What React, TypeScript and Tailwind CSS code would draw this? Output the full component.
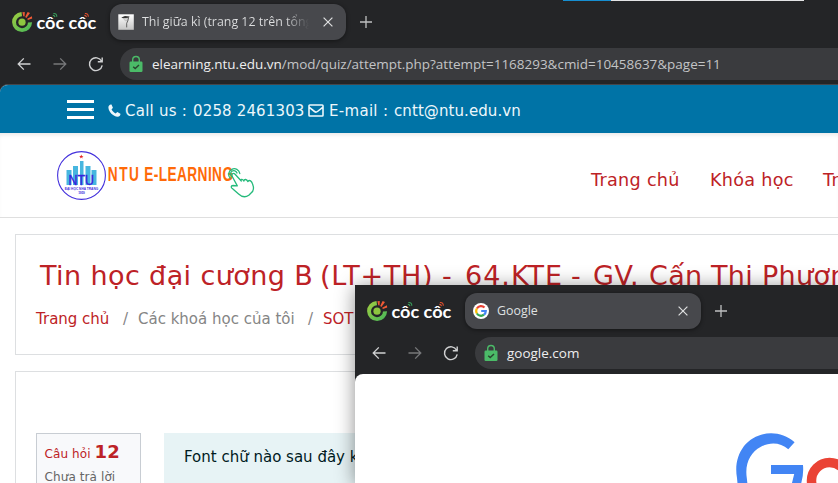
import React from "react";

const segoe = "font-['Open_Sans','Noto_Sans',sans-serif]";
const verdana = "font-['DejaVu_Sans',sans-serif]";

function CocCocLogo() {
  return (
    <svg width="88" height="28" viewBox="0 0 88 28" className="shrink-0">
      <defs>
        <linearGradient id="leaf" x1="0" y1="0" x2="1" y2="1">
          <stop offset="0" stopColor="#a4cf3f" />
          <stop offset="1" stopColor="#43b65a" />
        </linearGradient>
      </defs>
      <path d="M11.5 2A10 10 0 1 0 22.1 12.3L18 12.4A6 6 0 1 1 12 6.2Z" fill="url(#leaf)" />
      <circle cx="12" cy="12.2" r="3.6" fill="#8dc63f" />
      <path d="M12.4 2.2L14.8 2L14.5 6.6L13.3 6.2Z" fill="#f15a35" />
      <path d="M17.6 2L20 3.1L16.4 7.9L15.2 7.1Z" fill="#f15a35" />
      <path d="M21.9 6.3L22.2 8.6L17.9 9.9L17.2 8.8Z" fill="#f15a35" />
      <text x="26.5" y="19.2" textLength="59.8" lengthAdjust="spacingAndGlyphs" fill="#fff" fontSize="16.2" fontWeight="700" fontFamily="Lato, sans-serif">côc côc</text>
      <path d="M43.4 3.6q3.4-.4 3.4 3.2M42.8 5.2q1.8 0 2.2 2" stroke="#39a05c" strokeWidth="1.1" fill="none" />
      <path d="M74.9 3.6q3.4-.4 3.4 3.2M74.3 5.2q1.8 0 2.2 2" stroke="#e4512e" strokeWidth="1.1" fill="none" />
    </svg>
  );
}

function GoogleIcon() {
  return (
    <svg width="16" height="16" viewBox="0 0 16 16" className="shrink-0">
      <circle cx="8" cy="8" r="8" fill="#fff" />
      <g fill="none" strokeWidth="2.2">
        <path d="M3.9 5.5A4.8 4.8 0 0 1 11.5 4.6" stroke="#ea4335" />
        <path d="M3.9 5.5A4.8 4.8 0 0 0 3.9 10.5" stroke="#fbbc05" />
        <path d="M3.9 10.5A4.8 4.8 0 0 0 11 11.7" stroke="#34a853" />
        <path d="M11 11.7A4.8 4.8 0 0 0 12.8 8H8.2" stroke="#4285f4" />
      </g>
    </svg>
  );
}

function QuizIcon() {
  return (
    <svg width="16" height="16" viewBox="0 0 16 16" className="shrink-0">
      <defs>
        <linearGradient id="paper" x1="0" y1="0" x2="0" y2="1">
          <stop offset="0" stopColor="#fff" />
          <stop offset="1" stopColor="#c4c4c4" />
        </linearGradient>
      </defs>
      <rect width="15.5" height="15.5" x=".3" y=".3" fill="url(#paper)" />
      <path d="M3.3 3.4L7 2L11.6 2.6L10.8 3.7L5 4.2Z" fill="#333" />
      <path d="M5.6 4.6L9.8 4.4L9 7L7.2 6.8Z" fill="#d5d5d5" stroke="#999" strokeWidth=".4" />
      <path d="M10.6 3.8L9.8 7L8.7 9.2V13.4" fill="none" stroke="#555" strokeWidth=".9" />
    </svg>
  );
}

function NavIcons() {
  return (
    <svg width="120" height="32" viewBox="0 0 120 32" className="shrink-0" fill="none" strokeWidth="1.3">
      <path d="M30.5 16H18M23.8 10.4L18.2 16L23.8 21.6" stroke="#d0d1d2" />
      <path d="M53.5 16H66M60.2 10.4L65.8 16L60.2 21.6" stroke="#77787a" />
      <path d="M101.6 13.2A6.4 6.4 0 1 0 102.2 17.4M102.2 9.5V13.8H97.8" stroke="#d0d1d2" strokeWidth="1.4" />
    </svg>
  );
}

function LockIcon() {
  return (
    <svg width="14" height="18" viewBox="0 0 14 18" className="shrink-0">
      <path d="M3.7 7V4.8a3.3 3.3 0 0 1 6.6 0V7" fill="none" stroke="#4bbb68" strokeWidth="1.4" />
      <rect x=".5" y="6.5" width="13" height="10.5" rx="1.2" fill="#4bbb68" />
      <path d="M4.2 11.7L6.2 13.6L10 9.9" fill="none" stroke="#29442f" strokeWidth="1.4" />
    </svg>
  );
}

type ChromeProps = { icon: React.ReactNode; title: React.ReactNode; url: React.ReactNode };

function BrowserChrome({ icon, title, url }: ChromeProps) {
  return (
    <div className={`h-20 w-full bg-[#242527] pt-1 ${segoe}`}>
      <div className="flex h-9 items-center">
        <div className="w-[110px] shrink-0 pt-1 pl-2.5"><CocCocLogo /></div>
        <div className="flex h-9 w-[236px] shrink-0 items-center rounded-xl bg-[#47484c] pr-[13px] pl-2 shadow-[0_1px_4px_rgba(0,0,0,.45)]">
          {icon}
          <div className="ml-2 min-w-0 flex-1 overflow-hidden text-[12.4px] leading-5 whitespace-nowrap text-[#dfe0e1]">{title}</div>
          <svg width="10" height="10" viewBox="0 0 10 10" className="ml-3.5 shrink-0"><path d="M.6.6L9.4 9.4M9.4.6L.6 9.4" stroke="#dedfe0" strokeWidth="1.2" /></svg>
        </div>
        <svg width="12" height="12" viewBox="0 0 12 12" className="ml-3.5 shrink-0"><path d="M6 0V12M0 6H12" stroke="#bfc0c1" strokeWidth="1.3" /></svg>
      </div>
      <div className="mt-2 flex h-8">
        <NavIcons />
        <div className="flex h-8 flex-1 items-center rounded-l-full bg-[#3a3b3e] pl-[9px] text-[13.48px] whitespace-nowrap text-[#c3c4c6]">
          <LockIcon />
          <div className="ml-[9px]">{url}</div>
        </div>
      </div>
    </div>
  );
}

function NtuLogo() {
  return (
    <svg width="202" height="54" viewBox="0 0 202 54" className="shrink-0">
      <circle cx="25.5" cy="26.5" r="23.9" fill="#fff" stroke="#4330dc" strokeWidth="1.1" />
      <path d="M10.5 21h5v15h-5zM17 17h5v19h-5zM24 12h3.5v24h-3.5zM29.5 17h5v19h-5zM35.5 21h5v15h-5z" fill="#47b6df" />
      <path d="M25.3 5.5l.6 1.5h1.6l-1.3 1 .5 1.6-1.4-1-1.4 1 .5-1.6-1.3-1h1.6z" fill="#e52525" />
      <text x="12.5" y="36" textLength="25.5" lengthAdjust="spacingAndGlyphs" fontFamily="Liberation Sans, sans-serif" fontSize="14.5" fill="#3822dc" stroke="#3822dc" strokeWidth=".4">NTU</text>
      <text x="8.7" y="41.2" textLength="33.5" lengthAdjust="spacingAndGlyphs" fontFamily="Liberation Sans, sans-serif" fontWeight="700" fontSize="3.8" fill="#4330dc">ĐẠI HỌC NHA TRANG</text>
      <text x="22.3" y="45.3" textLength="6.5" fontFamily="Liberation Sans, sans-serif" fontWeight="700" fontSize="3.2" fill="#4330dc">1959</text>
      <g fontFamily="Liberation Sans, sans-serif" fontWeight="700" fontSize="19.3" fill="#ff6a08">
        <text transform="translate(51.7 32.2) scale(.71 1)" textLength="44">NTU</text>
        <text transform="translate(88.3 32.2) scale(.71 1)" textLength="125">E-LEARNING</text>
      </g>
      <g transform="translate(.8 .5)" fill="none" stroke="#25ba7b" strokeWidth="1.3" strokeLinecap="round" strokeLinejoin="round">
        <path d="M173.4 28.7A5.6 5.6 0 1 1 183 24" />
        <path d="M175.2 27.2A3.3 3.3 0 1 1 180.2 23.5" />
        <path d="M184.5 31.5L178.3 24.8C176.5 22.8 174 24.8 175.6 27.2L180.5 36.4L176.2 36C173.8 36 174 38.6 175.8 39.2L181.8 44.5C184.8 47.3 188.5 48.2 192 45.8L194.5 43.3C197.6 40.8 197 37.5 195.7 34.2C194.8 31.7 193 29.8 191 32C190 29.5 187.5 29.3 187 31.5C185.4 28.8 183.6 29.8 184.5 31.5" />
      </g>
    </svg>
  );
}

function ContactBar() {
  return (
    <div className={`flex h-12 items-center bg-[#0073a6] pl-[67px] text-[15px] text-[#edf7fb] ${verdana}`}>
      <div className="mr-[14px] flex w-[27px] flex-col gap-[5px]">
        <i className="h-[3px] bg-white" /><i className="h-[3px] bg-white" /><i className="h-[3px] bg-white" />
      </div>
      <svg width="13" height="13" viewBox="0 0 13 13" className="mt-[3px] shrink-0"><path d="M3.5.6L4.9 3.7C5 4.1 3.5 5 3.6 5.5C4.5 7.2 5.9 8.6 7.7 9.4C8.1 9.5 9 8 9.4 8.1L12.4 9.7C12.8 11.2 11.4 12.6 9.7 12.7C5 12.4.7 8 .4 3.5C.4 1.7 1.8.2 3.5.6Z" fill="#edf7fb" /></svg>
      <div className="mt-1 ml-[4px] flex w-[184px] whitespace-nowrap">
        <span className="w-[68px] tracking-[.25px]">Call us :</span><span className="tracking-[.15px]">0258 2461303</span>
      </div>
      <svg width="16" height="13" viewBox="0 0 16 13" className="mt-[3px] -ml-px shrink-0"><path d="M1.8 1H14.2Q15 1 15 1.8V11.2Q15 12 14.2 12H1.8Q1 12 1 11.2V1.8Q1 1 1.8 1ZM1 3.2L6.5 7.5Q8 8.7 9.5 7.5L15 3.2" fill="none" stroke="#edf7fb" strokeWidth="1.6" /></svg>
      <div className="mt-1 ml-[5px] flex whitespace-nowrap">
        <span className="w-[65px] tracking-[.3px]">E-mail :</span><span className="tracking-[.08px]">cntt@ntu.edu.vn</span>
      </div>
    </div>
  );
}

function GoogleWindow() {
  return (
    <section className="absolute top-[285px] left-[355px] h-[198px] w-[483px] bg-[#242527] pt-1 shadow-[0_2px_18px_rgba(0,0,0,.45)]">
      <BrowserChrome icon={<GoogleIcon />} title="Google" url={<span className="text-[#eeeeef]">google.com</span>} />
      <main className="mt-[5px] h-[109px] overflow-hidden rounded-tl-lg bg-white">
        <svg width="483" height="109" viewBox="0 0 483 109">
          <path d="M439.6 68.2C424 54.5 401.5 57 389 72C382.5 81 379.8 91 382 104L383 115H393L391.8 104C389.5 89 396 78 405.5 73C415 67.5 425.5 68.3 433.3 75.3Z" fill="#4285f4" />
          <path d="M416 91H448Q449 102 445 113H436L439.2 100H416Z" fill="#4285f4" />
          <circle cx="474.5" cy="106.5" r="18" fill="none" stroke="#ea4335" strokeWidth="9.5" />
        </svg>
      </main>
    </section>
  );
}

export default function App() {
  return (
    <div className="relative h-[483px] w-[838px] overflow-hidden bg-[#242527]">
      <div className="absolute top-0 left-[563px] flex h-px w-[241px]"><i className="w-12 bg-[#168ed0]" /><i className="flex-1 bg-[#e3e4e5]" /></div>
      <BrowserChrome
        icon={<QuizIcon />}
        title={<span className="block bg-linear-to-r from-[#dfe0e1] from-86% to-[#47484c] bg-clip-text text-transparent">Thi giữa kì (trang 12 trên tổng</span>}
        url={<span><span className="text-[#eeeeef]">elearning.ntu.edu.vn</span>/mod/quiz/attempt.php?attempt=1168293&amp;cmid=10458637&amp;page=11</span>}
      />
      <main className={`mt-1 h-[399px] overflow-hidden rounded-tl-lg border-t border-[#45464a] bg-white ${verdana}`}>
        <ContactBar />
        <header className="flex h-[85px] items-start border-b border-[#dfdfdf] pt-[16px] pl-14 shadow-[inset_0_4px_4px_-2px_rgba(0,0,0,.09)]">
          <NtuLogo />
          <nav className="mt-[18px] ml-[333px] flex text-[17.6px] tracking-[.3px] whitespace-nowrap text-[#bd2226]">
            <span className="w-[119px] shrink-0">Trang chủ</span>
            <span className="w-[113px] shrink-0">Khóa học</span>
            <span>Tr</span>
          </nav>
        </header>
        <section className="mt-4 ml-[15px] h-[121px] w-[850px] border border-[#dddfe1] pt-[21px]">
          <h1 className="flex pl-6 text-[27px] leading-10 whitespace-nowrap text-[#bd2226]">
            <span className="w-[280px] shrink-0 tracking-[.4px]">Tin học đại cương B</span>
            <span className="w-[122px] shrink-0 tracking-[.7px]">(LT+TH)</span>
            <span className="w-[23px] shrink-0">-</span>
            <span className="w-[106px] shrink-0 tracking-[1px]">64.KTE</span>
            <span className="w-[22px] shrink-0">-</span>
            <span className="w-[56px] shrink-0 tracking-[.6px]">GV.</span>
            <span className="w-[62px] shrink-0 tracking-[.3px]">Cấn</span>
            <span className="w-[51px] shrink-0 tracking-[.3px]">Thi</span>
            <span className="tracking-[.3px]">Phương</span>
          </h1>
          <div className="mt-[11px] flex pl-5 text-[15px] leading-6 whitespace-nowrap text-[#858585]">
            <span className="w-[87px] text-[#bd2226]">Trang chủ</span><span className="w-[15px]">/</span>
            <span className="w-[170px]">Các khoá học của tôi</span><span className="w-[15px]">/</span><span className="text-[#bd2226]">SOT</span>
          </div>
        </section>
        <section className="mt-4 ml-[15px] flex h-[130px] w-[850px] border border-[#dddfe1] pt-[61px] pl-5">
          <aside className="h-24 w-[105px] border border-[#c8cdd3] bg-[#f8f9fb] pt-[6px] pl-[7.5px] text-[12px] whitespace-nowrap text-[#656565]">
            <div className="leading-[23px] tracking-[.1px] text-[#bd2226]">Câu hỏi <b className="text-[18px]">12</b></div>
            <div className="leading-[23px] tracking-[.1px]">Chưa trả lời</div>
          </aside>
          <article className="ml-[23px] h-24 flex-1 bg-[#e7f3f5] pt-[12px] pl-5 text-[15px] leading-6 whitespace-nowrap text-[#001a1e]">Font chữ nào sau đây không</article>
        </section>
      </main>
      <GoogleWindow />
    </div>
  );
}
